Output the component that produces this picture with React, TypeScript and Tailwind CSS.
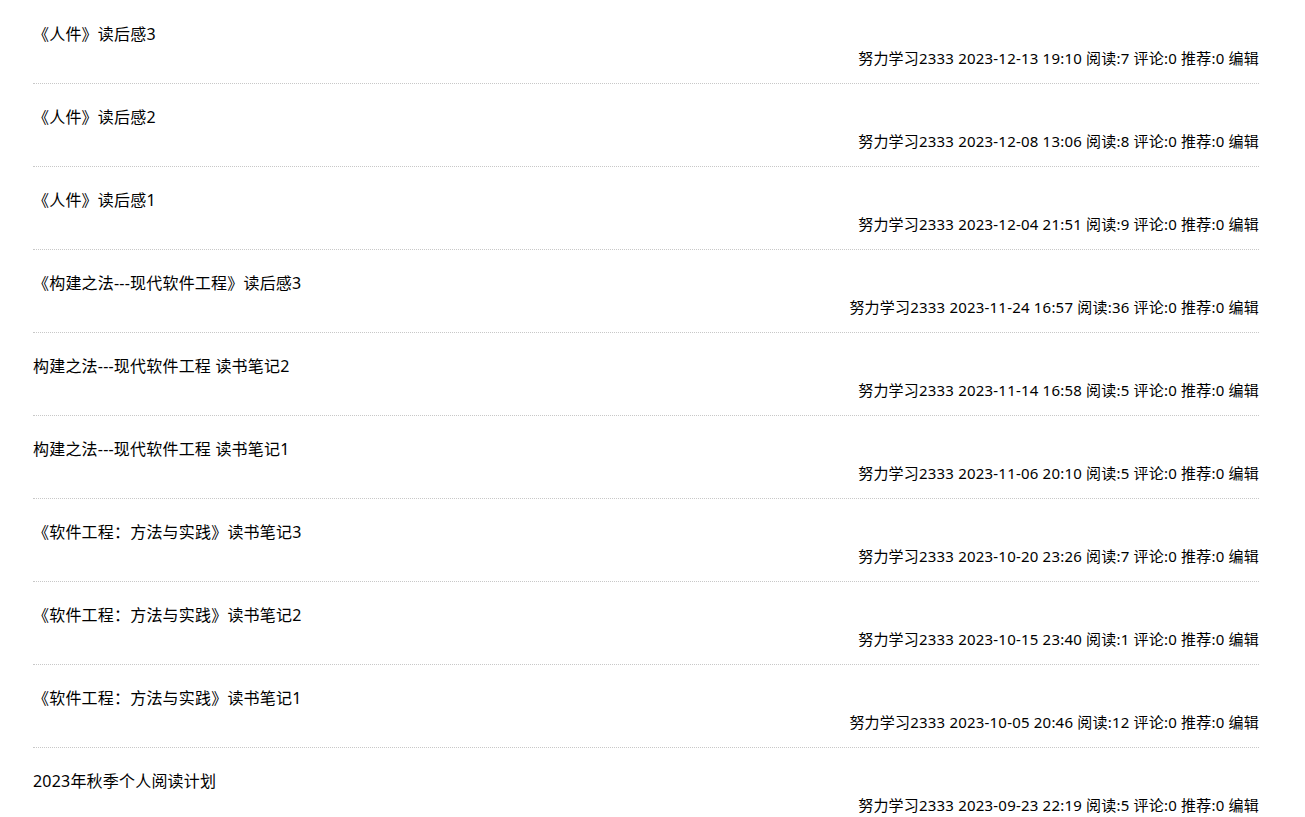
import React from 'react';

const posts = [
  { title: '《人件》读后感3', date: '2023-12-13 19:10', read: 7 },
  { title: '《人件》读后感2', date: '2023-12-08 13:06', read: 8 },
  { title: '《人件》读后感1', date: '2023-12-04 21:51', read: 9 },
  { title: '《构建之法---现代软件工程》读后感3', date: '2023-11-24 16:57', read: 36 },
  { title: '构建之法---现代软件工程 读书笔记2', date: '2023-11-14 16:58', read: 5 },
  { title: '构建之法---现代软件工程 读书笔记1', date: '2023-11-06 20:10', read: 5 },
  { title: '《软件工程：方法与实践》读书笔记3', date: '2023-10-20 23:26', read: 7 },
  { title: '《软件工程：方法与实践》读书笔记2', date: '2023-10-15 23:40', read: 1 },
  { title: '《软件工程：方法与实践》读书笔记1', date: '2023-10-05 20:46', read: 12 },
  { title: '2023年秋季个人阅读计划', date: '2023-09-23 22:19', read: 5 },
];

export default function App() {
  return (
    <div className="min-h-screen bg-white pt-px text-black [font-family:'Noto_Sans','Noto_Sans_CJK_SC',sans-serif]">
      <div className="mx-[33px] w-[1226px]">
        {posts.map((p) => (
          <div key={p.date} className="border-b border-dotted border-[#c8c8c8] pb-[15px] pt-[23px]">
            <div className="text-[16px] leading-[20px] tracking-[0.2px]">
              <a href="#" className="text-black">{p.title}</a>
            </div>
            <div className="mt-[4px] text-right text-[15px] leading-[20px] tracking-[0.2px]">
              努力学习2333 {p.date} 阅读:{p.read} 评论:0 推荐:0 <a href="#">编辑</a>
            </div>
          </div>
        ))}
      </div>
    </div>
  );
}
